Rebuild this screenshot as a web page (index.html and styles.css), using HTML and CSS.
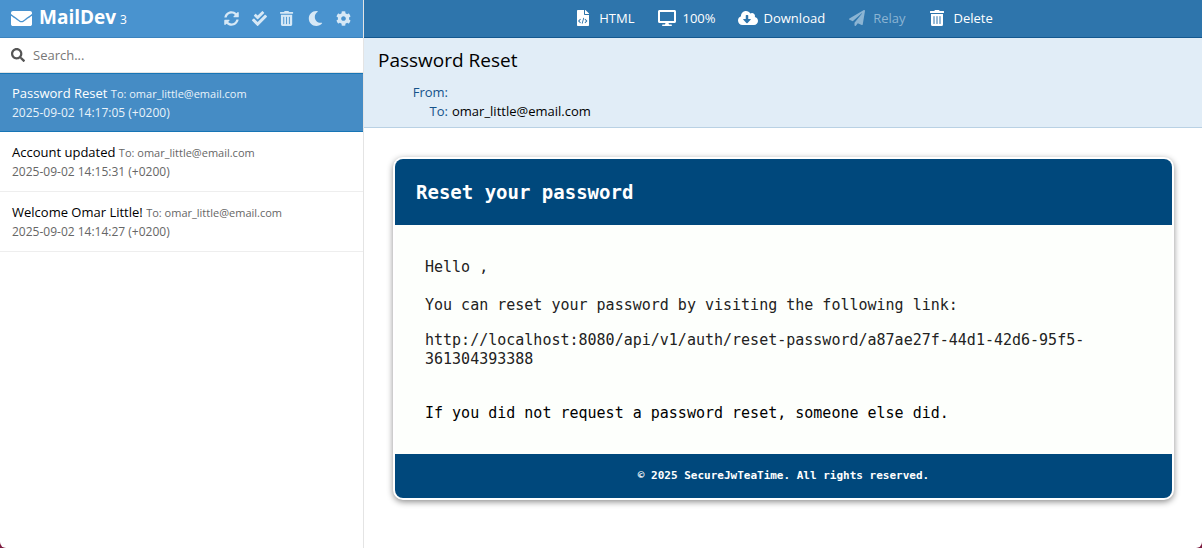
FILE: index.html
```html
<!DOCTYPE html>
<html lang="en">
<head>
<meta charset="utf-8">
<meta name="viewport" content="width=device-width, initial-scale=1">
<title>MailDev</title>
<link rel="stylesheet" href="styles.css">
</head>
<body>
<div class="app">
  <aside class="sidebar">
    <header class="brand-bar">
      <h1 class="brand">
        <svg class="brand-icon" viewBox="0 64 512 384" preserveAspectRatio="none" aria-hidden="true"><path d="M502.300 190.800c3.900-3.100 9.700-.2 9.700 4.700V400c0 26.500-21.500 48-48 48H48c-26.500 0-48-21.500-48-48V195.600c0-5 5.700-7.800 9.700-4.700 22.400 17.400 52.100 39.500 154.100 113.600 21.100 15.400 56.700 47.800 92.200 47.600 35.700.3 72-32.800 92.300-47.600 102-74.100 131.600-96.300 154-113.700zM256 320c23.200.4 56.600-29.200 73.400-41.400 132.700-96.300 142.800-104.700 173.400-128.700 5.800-4.500 9.200-11.500 9.200-18.900v-19c0-26.500-21.500-48-48-48H48c-26.500 0-48 21.500-48 48v19c0 7.400 3.400 14.300 9.200 18.900 30.600 23.900 40.700 32.400 173.400 128.700 16.800 12.200 50.200 41.800 73.400 41.400z"/></svg>
        <span>MailDev</span>
        <small class="count">3</small>
      </h1>
      <nav class="tools">
        <button class="tool" aria-label="Refresh"><svg class="icon" viewBox="0 0 512 512"><path d="M370.720 133.280C339.458 104.008 298.888 87.962 255.848 88c-77.458.068-144.328 53.178-162.791 126.850-1.344 5.363-6.122 9.150-11.651 9.150H24.103c-7.498 0-13.194-6.807-11.807-14.176C33.933 94.924 134.813 8 256 8c66.448 0 126.791 26.136 171.315 68.685L463.030 40.970C478.149 25.851 504 36.559 504 57.941V192c0 13.255-10.745 24-24 24H345.941c-21.382 0-32.090-25.851-16.971-40.971l41.750-41.749zM32 296h134.059c21.382 0 32.090 25.851 16.971 40.971l-41.750 41.750c31.262 29.273 71.835 45.319 114.876 45.280 77.418-.07 144.315-53.144 162.787-126.849 1.344-5.363 6.122-9.150 11.651-9.150h57.304c7.498 0 13.194 6.807 11.807 14.176C478.067 417.076 377.187 504 256 504c-66.448 0-126.791-26.136-171.315-68.685L48.970 471.030C33.851 486.149 8 475.441 8 454.059V320c0-13.255 10.745-24 24-24z"/></svg></button>
        <button class="tool" aria-label="Mark all read"><svg class="icon" viewBox="0 0 512 512"><path d="M505 174.800l-39.600-39.600c-9.400-9.400-24.600-9.400-33.900 0L192 374.700 80.600 263.200c-9.400-9.400-24.600-9.400-33.900 0L7 302.900c-9.400 9.400-9.400 24.600 0 34L175 505c9.400 9.400 24.600 9.400 33.900 0l296-296.200c9.400-9.500 9.400-24.700.1-34zm-324.300 106c6.200 6.300 16.400 6.300 22.600 0l208-208.200c6.200-6.300 6.200-16.400 0-22.600L366.100 4.700c-6.200-6.300-16.400-6.300-22.600 0L192 156.200l-55.400-55.500c-6.200-6.300-16.400-6.300-22.600 0L68.700 146c-6.200 6.300-6.200 16.400 0 22.600l112 112.200z"/></svg></button>
        <button class="tool" aria-label="Delete all"><svg class="icon" viewBox="0 0 448 512"><path fill-rule="evenodd" d="M32 464a48 48 0 0 0 48 48h288a48 48 0 0 0 48-48V128H32zm272-256a16 16 0 0 1 32 0v224a16 16 0 0 1-32 0zm-96 0a16 16 0 0 1 32 0v224a16 16 0 0 1-32 0zm-96 0a16 16 0 0 1 32 0v224a16 16 0 0 1-32 0zM432 32H312l-9.400-18.700A24 24 0 0 0 281.100 0H166.800a23.720 23.720 0 0 0-21.400 13.300L136 32H16A16 16 0 0 0 0 48v32a16 16 0 0 0 16 16h416a16 16 0 0 0 16-16V48a16 16 0 0 0-16-16z"/></svg></button>
        <button class="tool" aria-label="Dark mode"><svg class="icon" viewBox="0 0 512 512"><path d="M283.211 512c78.962 0 151.079-35.925 198.857-94.792 7.068-8.708-.639-21.430-11.562-19.350-124.203 23.654-238.262-71.576-238.262-196.954 0-72.222 38.662-138.635 101.498-174.394 9.686-5.512 7.250-20.197-3.756-22.230A258.156 258.156 0 0 0 283.211 0c-141.309 0-256 114.511-256 256 0 141.309 114.511 256 256 256z"/></svg></button>
        <button class="tool" aria-label="Settings"><svg class="icon" viewBox="0 0 512 512"><path d="M487.400 315.700l-42.600-24.600c4.300-23.200 4.300-47 0-70.200l42.600-24.600c4.900-2.800 7.100-8.600 5.500-14-11.100-35.600-30-67.800-54.700-94.600-3.800-4.100-10-5.100-14.800-2.300L380.800 110c-17.900-15.400-38.500-27.300-60.800-35.100V25.800c0-5.600-3.900-10.500-9.400-11.700-36.700-8.200-74.300-7.800-109.200 0-5.500 1.200-9.400 6.100-9.400 11.700V75c-22.200 7.900-42.800 19.800-60.800 35.100L88.700 85.500c-4.900-2.800-11-1.900-14.800 2.300-24.700 26.700-43.600 58.900-54.700 94.600-1.700 5.400.6 11.200 5.500 14L67.300 221c-4.300 23.200-4.300 47 0 70.200l-42.600 24.600c-4.900 2.800-7.100 8.600-5.500 14 11.100 35.600 30 67.800 54.700 94.600 3.800 4.100 10 5.100 14.800 2.300l42.600-24.600c17.900 15.400 38.500 27.300 60.800 35.100v49.200c0 5.600 3.900 10.500 9.400 11.700 36.700 8.200 74.300 7.800 109.200 0 5.500-1.200 9.400-6.100 9.400-11.700v-49.200c22.200-7.900 42.800-19.800 60.800-35.100l42.600 24.600c4.900 2.800 11 1.900 14.800-2.300 24.700-26.700 43.600-58.900 54.700-94.600 1.500-5.500-.7-11.300-5.600-14.100zM256 336c-44.100 0-80-35.900-80-80s35.900-80 80-80 80 35.900 80 80-35.900 80-80 80z"/></svg></button>
      </nav>
    </header>
    <label class="search">
      <svg class="icon" viewBox="0 0 512 512" aria-hidden="true"><path d="M505 442.700L405.300 343c-4.500-4.500-10.600-7-17-7H372c27.600-35.300 44-79.700 44-128C416 93.100 322.900 0 208 0S0 93.100 0 208s93.100 208 208 208c48.300 0 92.700-16.400 128-44v16.300c0 6.400 2.500 12.500 7 17l99.700 99.700c9.400 9.400 24.600 9.400 33.900 0l28.300-28.300c9.400-9.400 9.400-24.600.1-34zM208 336c-70.700 0-128-57.200-128-128 0-70.700 57.200-128 128-128 70.700 0 128 57.200 128 128 0 70.700-57.200 128-128 128z"/></svg>
      <input class="search-input" type="text" placeholder="Search..." aria-label="Search">
    </label>
    <ul class="mail-list">
      <li><a class="mail current" href="#"><span class="mail-subject">Password Reset</span> <span class="mail-meta">To: omar_little@email.com</span><span class="mail-date">2025-09-02 14:17:05 (+0200)</span></a></li>
      <li><a class="mail" href="#"><span class="mail-subject">Account updated</span> <span class="mail-meta">To: omar_little@email.com</span><span class="mail-date">2025-09-02 14:15:31 (+0200)</span></a></li>
      <li><a class="mail" href="#"><span class="mail-subject">Welcome Omar Little!</span> <span class="mail-meta">To: omar_little@email.com</span><span class="mail-date">2025-09-02 14:14:27 (+0200)</span></a></li>
    </ul>
  </aside>
  <main class="main">
    <nav class="toolbar">
      <button class="action"><svg class="action-icon" viewBox="0 0 384 512"><path fill-rule="evenodd" d="M384 121.900V128H256V0h6.100c6.400 0 12.500 2.500 17 7l97.900 98c4.500 4.500 7 10.600 7 16.900zM248 160c-13.200 0-24-10.800-24-24V0H24C10.700 0 0 10.700 0 24v464c0 13.300 10.700 24 24 24h336c13.300 0 24-10.700 24-24V160zM123 401l-19 20-66-62v-14l66-62 19 20-48 49zM177 437l-27-8 53-182 27 8zM262 421l-19-20 48-49-48-49 19-20 66 62v14z"/></svg>HTML</button>
      <button class="action"><svg class="action-icon" viewBox="0 0 576 512"><path d="M528 0H48C21.500 0 0 21.500 0 48v320c0 26.500 21.500 48 48 48h192l-16 48h-72c-13.300 0-24 10.700-24 24s10.700 24 24 24h272c13.300 0 24-10.700 24-24s-10.700-24-24-24h-72l-16-48h192c26.500 0 48-21.500 48-48V48c0-26.500-21.500-48-48-48zm-16 352H64V64h448v288z"/></svg>100%</button>
      <button class="action"><svg class="action-icon" viewBox="0 0 640 512"><path d="M537.600 226.600c4.100-10.700 6.400-22.400 6.400-34.600 0-53-43-96-96-96-19.700 0-38.100 6-53.300 16.200C367 64.200 315.300 32 256 32c-88.400 0-160 71.600-160 160 0 2.700.1 5.400.2 8.100C40.200 219.800 0 273.200 0 336c0 79.500 64.500 144 144 144h368c70.700 0 128-57.300 128-128 0-61.900-44-113.600-102.400-125.400zm-132.900 88.700L299.300 420.700c-6.200 6.200-16.400 6.200-22.600 0L171.300 315.300c-10.100-10.100-2.900-27.300 11.300-27.300H248V176c0-8.800 7.200-16 16-16h48c8.800 0 16 7.200 16 16v112h65.400c14.200 0 21.400 17.200 11.300 27.300z"/></svg>Download</button>
      <button class="action" disabled><svg class="action-icon" viewBox="0 0 512 512"><path d="M476 3.200L12.500 270.600c-18.100 10.400-15.800 35.600 2.200 43.200L121 358.400l287.300-253.200c5.500-4.900 13.300 2.600 8.600 8.300L176 407v80.500c0 23.600 28.500 32.900 42.500 15.800L282 426l124.600 52.200c14.200 6 30.400-2.900 33-18.200l72-432C515 7.800 493.300-6.800 476 3.200z"/></svg>Relay</button>
      <button class="action"><svg class="action-icon" viewBox="0 0 448 512"><path fill-rule="evenodd" d="M32 464a48 48 0 0 0 48 48h288a48 48 0 0 0 48-48V128H32zm272-256a16 16 0 0 1 32 0v224a16 16 0 0 1-32 0zm-96 0a16 16 0 0 1 32 0v224a16 16 0 0 1-32 0zm-96 0a16 16 0 0 1 32 0v224a16 16 0 0 1-32 0zM432 32H312l-9.400-18.700A24 24 0 0 0 281.100 0H166.800a23.720 23.720 0 0 0-21.400 13.300L136 32H16A16 16 0 0 0 0 48v32a16 16 0 0 0 16 16h416a16 16 0 0 0 16-16V48a16 16 0 0 0-16-16z"/></svg>Delete</button>
    </nav>
    <header class="mail-head">
      <h2 class="mail-title">Password Reset</h2>
      <dl class="fields">
        <dt>From:</dt><dd></dd>
        <dt>To:</dt><dd>omar_little@email.com</dd>
      </dl>
    </header>
    <section class="preview">
      <article class="card">
        <h3 class="card-head">Reset your password</h3>
        <div class="card-body">
          <p class="hello">Hello ,</p>
          <p class="intro">You can reset your password by visiting the following link:</p>
          <p class="link">http://localhost:8080/api/v1/auth/reset-password/a87ae27f-44d1-42d6-95f5-361304393388</p>
          <p class="note">If you did not request a password reset, someone else did.</p>
        </div>
        <footer class="card-foot">© 2025 SecureJwTeaTime. All rights reserved.</footer>
      </article>
    </section>
  </main>
</div>
</body>
</html>
```
FILE: styles.css
```css
* { box-sizing: border-box; }
body {
  margin: 0;
  background: #7d1c40;
  font: 13px/20px "Open Sans", "Noto Sans", sans-serif;
  color: #000;
}
button { border: 0; padding: 0; background: none; font: inherit; color: inherit; }
h1, h2, h3, p, ul, dl, dd { margin: 0; padding: 0; }
svg { display: block; fill: currentColor; flex: none; }
.app {
  display: grid;
  grid-template-columns: 364px 1fr;
  min-height: 100vh;
  background: #fff;
  border-radius: 0 0 6px 6px;
  overflow: hidden;
}
.sidebar { border-right: 1px solid #e4e4e4; }
.brand-bar {
  display: flex;
  align-items: center;
  justify-content: space-between;
  height: 38px;
  padding: 0 12px 0 11px;
  background: #4993cf;
  border-bottom: 1px solid #3b83be;
  color: #fff;
}
.brand { display: flex; align-items: baseline; font-size: 19px; line-height: 24px; font-weight: 700; }
.brand-icon { width: 21px; height: 15px; margin-right: 7px; align-self: center; }
.count { margin-left: 4px; font-size: 12px; font-weight: 400; }
.tools { display: flex; gap: 12px; color: #d6e8f6; }
.tool { width: 16px; display: flex; justify-content: center; }
.icon { height: 15px; }
.search {
  display: flex;
  align-items: center;
  gap: 8px;
  height: 34px;
  padding: 0 11px;
  color: #555;
}
.search .icon { height: 14px; }
.search-input { flex: 1; min-width: 0; border: 0; padding: 0; outline: 0; background: none; font: inherit; color: #333; }
.search-input::placeholder { color: #777; opacity: 1; }
.mail-list { list-style: none; border-top: 1px solid #e4e4e4; }
.mail {
  display: block;
  padding: 10px 12px;
  border-bottom: 1px solid #eee;
  text-decoration: none;
  color: #000;
}
.mail-meta { font-size: 11px; line-height: 16px; color: #666; }
.mail-date { display: block; font-size: 12px; line-height: 19px; color: #666; }
.current { padding: 9px 12px; border-top: 1px solid #1775b5; border-bottom-color: #1775b5; background: #458cc5; color: #fff; }
.current .mail-meta, .current .mail-date { color: #e9f3fa; }
.main { display: flex; flex-direction: column; min-width: 0; }
.toolbar {
  display: flex;
  justify-content: center;
  align-items: center;
  gap: 22px;
  height: 38px;
  padding-bottom: 2px;
  background: #2e75ac;
  border-bottom: 1px solid #14588f;
  color: #fff;
}
.action { display: flex; align-items: center; gap: 6px; }
.action:disabled { color: #8bb4d3; }
.action-icon { width: 20px; height: 16px; }
.mail-head { padding: 8px 14px 6px; background: #e1edf7; border-bottom: 1px solid #b9d1e4; }
.mail-title { font-size: 19px; line-height: 28px; font-weight: 400; }
.fields { display: grid; grid-template-columns: 70px 1fr; column-gap: 4px; margin-top: 9px; line-height: 19px; }
.fields dt { text-align: right; color: #15528a; }
.preview { padding: 29px 28px 48px 29px; font-family: "DejaVu Sans Mono", monospace; font-size: 15px; line-height: 19px; }
.card {
  border: 2px solid #fff;
  border-radius: 10px;
  background: #fdfffc;
  box-shadow: 0 2px 6px rgba(0, 0, 0, 0.45);
  overflow: hidden;
}
.card-head { padding: 21px; background: #00487c; color: #fff; font-size: 19px; line-height: 24px; }
.card-body { padding: 33px 30px 31px; color: #222; }
.hello { margin-bottom: 19px; }
.intro { margin-bottom: 16px; }
.link { margin-bottom: 35px; max-width: 680px; }
.note { color: #000; }
.card-foot { padding: 12px; background: #00487c; color: #fff; font-size: 11px; line-height: 20px; font-weight: 700; text-align: center; }
```
